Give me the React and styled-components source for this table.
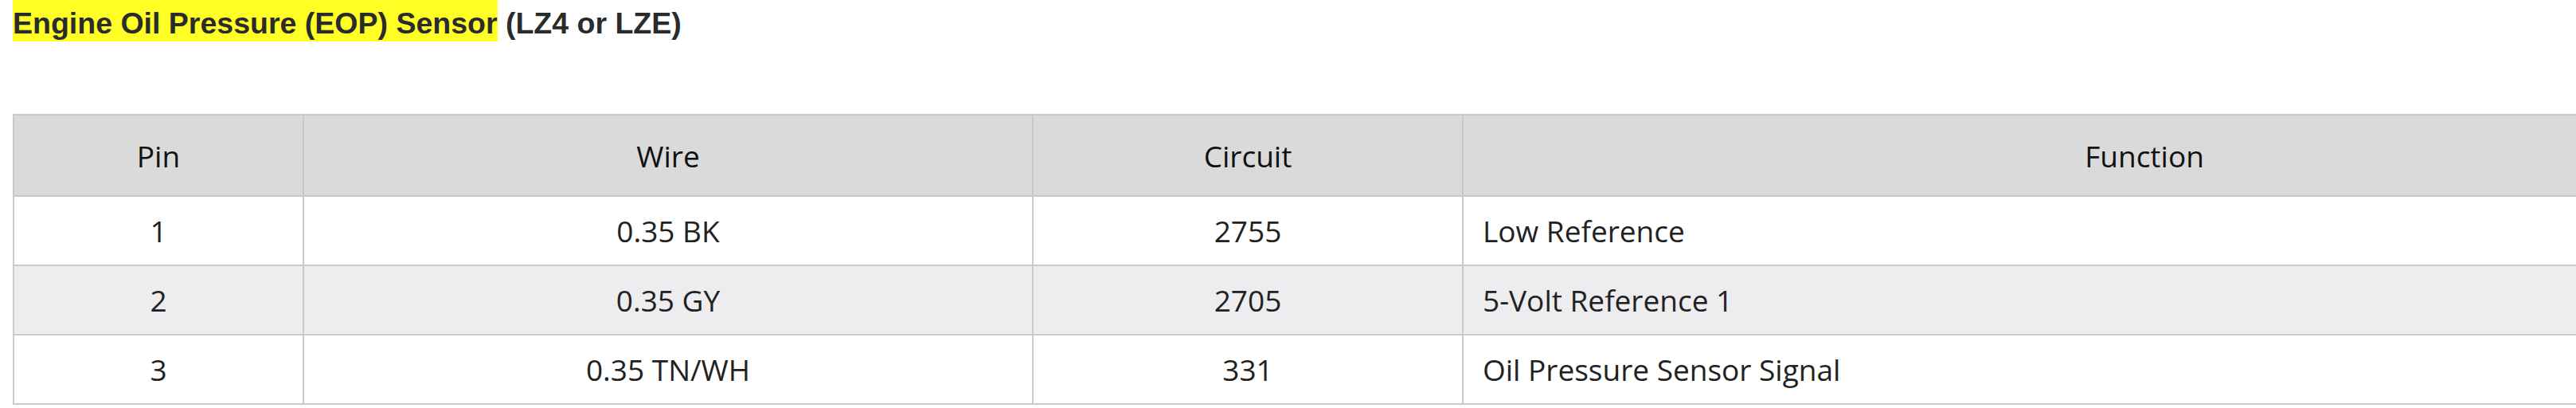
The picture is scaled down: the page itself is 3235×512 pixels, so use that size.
import React from "react";
import styled, { createGlobalStyle } from "styled-components";

const GlobalStyle = createGlobalStyle`
  html, body {
    margin: 0;
    padding: 0;
    background: #ffffff;
    overflow: hidden;
  }
  body {
    font-family: "Open Sans", "Noto Sans", sans-serif;
  }
`;

const Page = styled.div`
  padding: 0 0 0 16px;
  width: 3560px;
`;

const Title = styled.div`
  margin: 0;
  font-family: "Liberation Sans", Arial, sans-serif;
  font-weight: 700;
  font-size: 37.5px;
  line-height: 58px;
  color: #2b2b2b;
  white-space: nowrap;
`;

const Highlight = styled.span`
  background: #ffff26;
  padding: 8px 0 2px;
`;

const Table = styled.table`
  margin-top: 85px;
  border-collapse: collapse;
  table-layout: fixed;
  width: 3532px;
  font-family: "Open Sans", "Noto Sans", sans-serif;
  font-size: 37px;
  line-height: 49px;
`;

const Col = styled.col`
  width: ${(p) => p.$w}px;
`;

const HeadCell = styled.th`
  background: #dadada;
  border: 2px solid #c8c8c8;
  padding: 25.5px 24px;
  font-weight: 400;
  color: #111111;
  text-align: center;
  vertical-align: middle;
`;

const Row = styled.tr`
  background: ${(p) => (p.$alt ? "#ededef" : "#ffffff")};
`;

const Cell = styled.td`
  border: 2px solid #cbcbcb;
  padding: 18px 24px;
  color: #222222;
  text-align: ${(p) => (p.$left ? "left" : "center")};
  vertical-align: middle;
  white-space: nowrap;
`;

const rows = [
  { pin: "1", wire: "0.35 BK", circuit: "2755", fn: "Low Reference" },
  { pin: "2", wire: "0.35 GY", circuit: "2705", fn: "5-Volt Reference 1" },
  { pin: "3", wire: "0.35 TN/WH", circuit: "331", fn: "Oil Pressure Sensor Signal" },
];

export default function App() {
  return (
    <>
      <GlobalStyle />
      <Page>
        <Title>
          <Highlight>Engine Oil Pressure (EOP) Sensor</Highlight> (LZ4 or LZE)
        </Title>
        <Table>
          <colgroup>
            <Col $w={364} />
            <Col $w={916} />
            <Col $w={540} />
            <Col $w={1712} />
          </colgroup>
          <thead>
            <tr>
              <HeadCell>Pin</HeadCell>
              <HeadCell>Wire</HeadCell>
              <HeadCell>Circuit</HeadCell>
              <HeadCell>Function</HeadCell>
            </tr>
          </thead>
          <tbody>
            {rows.map((r, i) => (
              <Row key={r.pin} $alt={i % 2 === 1}>
                <Cell>{r.pin}</Cell>
                <Cell>{r.wire}</Cell>
                <Cell>{r.circuit}</Cell>
                <Cell $left>{r.fn}</Cell>
              </Row>
            ))}
          </tbody>
        </Table>
      </Page>
    </>
  );
}
